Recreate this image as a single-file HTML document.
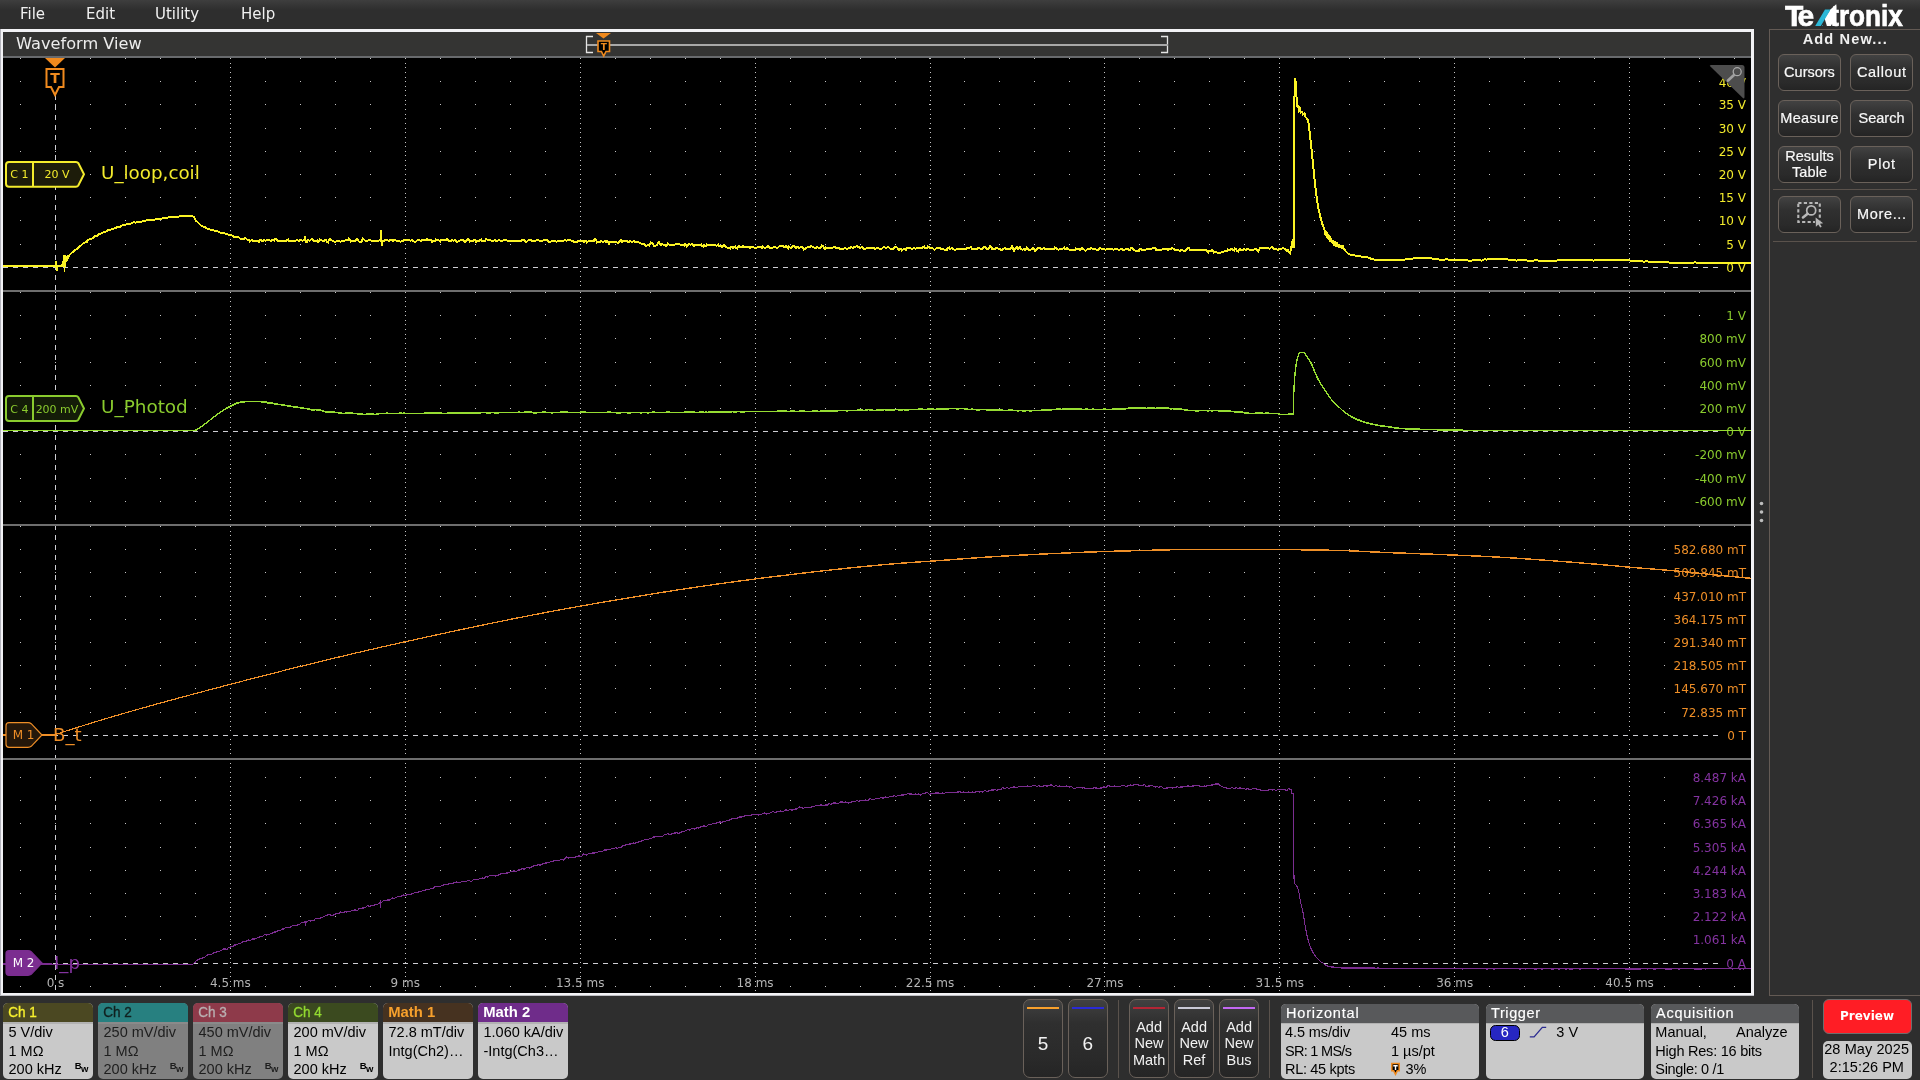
<!DOCTYPE html><html lang="en"><head><meta charset="utf-8"><title>Tektronix - Waveform View</title><style>html,body{margin:0;padding:0;background:#2e2e2e}body{width:1920px;height:1080px;position:relative;overflow:hidden}.a{position:absolute}svg{position:absolute;left:0;top:0;will-change:transform}text{white-space:pre}.lb{font-family:"Liberation Sans","DejaVu Sans",sans-serif}.dj{font-family:"DejaVu Sans","Liberation Sans",sans-serif}</style></head><body>
<div class="a" style="left:0px;top:0px;width:1920px;height:29px;background:linear-gradient(#3e3e3e,#2e2e2e 10px)"></div>
<div class="a" style="left:0px;top:29px;width:1754px;height:967px;background:#f2f2f5"></div>
<div class="a" style="left:0px;top:29px;width:1px;height:967px;background:#b4b4bb"></div>
<div class="a" style="left:0px;top:995px;width:1754px;height:1px;background:#bfbfc4"></div>
<div class="a" style="left:3px;top:32px;width:1748px;height:24px;background:#343433"></div>
<div class="a" style="left:3px;top:56px;width:1748px;height:2px;background:#686a6d"></div>
<div class="a" style="left:3px;top:58px;width:1748px;height:935px;background:#000"></div>
<div class="a" style="left:1754px;top:29px;width:15px;height:1051px;background:#2e2e2e"></div>
<div class="a" style="left:1769px;top:29px;width:160px;height:967px;box-sizing:border-box;border:1px solid #635a54;background:#2f2f2f"></div>
<div class="a" style="left:1778px;top:54px;width:63px;height:36.5px;box-sizing:border-box;border:1px solid #6a615a;border-radius:6px;background:linear-gradient(#424242,#303030 38%,#2a2a2a 80%,#242424)"></div>
<div class="a" style="left:1850px;top:54px;width:63px;height:36.5px;box-sizing:border-box;border:1px solid #6a615a;border-radius:6px;background:linear-gradient(#424242,#303030 38%,#2a2a2a 80%,#242424)"></div>
<div class="a" style="left:1778px;top:100px;width:63px;height:36.5px;box-sizing:border-box;border:1px solid #6a615a;border-radius:6px;background:linear-gradient(#424242,#303030 38%,#2a2a2a 80%,#242424)"></div>
<div class="a" style="left:1850px;top:100px;width:63px;height:36.5px;box-sizing:border-box;border:1px solid #6a615a;border-radius:6px;background:linear-gradient(#424242,#303030 38%,#2a2a2a 80%,#242424)"></div>
<div class="a" style="left:1778px;top:146px;width:63px;height:36.5px;box-sizing:border-box;border:1px solid #6a615a;border-radius:6px;background:linear-gradient(#424242,#303030 38%,#2a2a2a 80%,#242424)"></div>
<div class="a" style="left:1850px;top:146px;width:63px;height:36.5px;box-sizing:border-box;border:1px solid #6a615a;border-radius:6px;background:linear-gradient(#424242,#303030 38%,#2a2a2a 80%,#242424)"></div>
<div class="a" style="left:1778px;top:196px;width:63px;height:36.5px;box-sizing:border-box;border:1px solid #6a615a;border-radius:6px;background:linear-gradient(#424242,#303030 38%,#2a2a2a 80%,#242424)"></div>
<div class="a" style="left:1850px;top:196px;width:63px;height:36.5px;box-sizing:border-box;border:1px solid #6a615a;border-radius:6px;background:linear-gradient(#424242,#303030 38%,#2a2a2a 80%,#242424)"></div>
<div class="a" style="left:1773px;top:189px;width:144px;height:1px;background:#5a524c"></div>
<div class="a" style="left:1773px;top:241px;width:144px;height:1px;background:#5a524c"></div>
<div class="a" style="left:3px;top:1003px;width:90px;height:76px;border-radius:5px;background:#c9c9c9;overflow:hidden"></div>
<div class="a" style="left:3px;top:1003px;width:90px;height:19px;border-radius:5px 5px 0 0;background:#4b4822"></div>
<div class="a" style="left:3px;top:1022px;width:90px;height:1.6px;background:#b2b2b2"></div>
<div class="a" style="left:98px;top:1003px;width:90px;height:76px;border-radius:5px;background:#808080;overflow:hidden"></div>
<div class="a" style="left:98px;top:1003px;width:90px;height:19px;border-radius:5px 5px 0 0;background:#278080"></div>
<div class="a" style="left:98px;top:1022px;width:90px;height:1.6px;background:#8a8a8a"></div>
<div class="a" style="left:193px;top:1003px;width:90px;height:76px;border-radius:5px;background:#808080;overflow:hidden"></div>
<div class="a" style="left:193px;top:1003px;width:90px;height:19px;border-radius:5px 5px 0 0;background:#8e3a4a"></div>
<div class="a" style="left:193px;top:1022px;width:90px;height:1.6px;background:#8a8a8a"></div>
<div class="a" style="left:288px;top:1003px;width:90px;height:76px;border-radius:5px;background:#c9c9c9;overflow:hidden"></div>
<div class="a" style="left:288px;top:1003px;width:90px;height:19px;border-radius:5px 5px 0 0;background:#3b4a1f"></div>
<div class="a" style="left:288px;top:1022px;width:90px;height:1.6px;background:#b2b2b2"></div>
<div class="a" style="left:383px;top:1003px;width:90px;height:76px;border-radius:5px;background:#c9c9c9;overflow:hidden"></div>
<div class="a" style="left:383px;top:1003px;width:90px;height:19px;border-radius:5px 5px 0 0;background:#463220"></div>
<div class="a" style="left:383px;top:1022px;width:90px;height:1.6px;background:#b2b2b2"></div>
<div class="a" style="left:478px;top:1003px;width:90px;height:76px;border-radius:5px;background:#c9c9c9;overflow:hidden"></div>
<div class="a" style="left:478px;top:1003px;width:90px;height:19px;border-radius:5px 5px 0 0;background:#6f2c8a"></div>
<div class="a" style="left:478px;top:1022px;width:90px;height:1.6px;background:#b2b2b2"></div>
<div class="a" style="left:1023.4px;top:999.3px;width:39.4px;height:79.2px;box-sizing:border-box;border:1px solid #6a615a;border-radius:7px;background:linear-gradient(#414141,#2f2f2f 30%,#2a2a2a 75%,#252525)"></div>
<div class="a" style="left:1027.2px;top:1007.2px;width:31.8px;height:2px;background:#f7a02c"></div>
<div class="a" style="left:1068.2px;top:999.3px;width:39.4px;height:79.2px;box-sizing:border-box;border:1px solid #6a615a;border-radius:7px;background:linear-gradient(#414141,#2f2f2f 30%,#2a2a2a 75%,#252525)"></div>
<div class="a" style="left:1072px;top:1007.2px;width:31.8px;height:2px;background:#2a2ad6"></div>
<div class="a" style="left:1118px;top:1000px;width:1px;height:78px;background:#5a524c"></div>
<div class="a" style="left:1129.4px;top:999.3px;width:39.4px;height:79.2px;box-sizing:border-box;border:1px solid #6a615a;border-radius:7px;background:linear-gradient(#414141,#2f2f2f 30%,#2a2a2a 75%,#252525)"></div>
<div class="a" style="left:1133.2px;top:1007.2px;width:31.8px;height:2px;background:#b32535"></div>
<div class="a" style="left:1174.4px;top:999.3px;width:39.4px;height:79.2px;box-sizing:border-box;border:1px solid #6a615a;border-radius:7px;background:linear-gradient(#414141,#2f2f2f 30%,#2a2a2a 75%,#252525)"></div>
<div class="a" style="left:1178.2px;top:1007.2px;width:31.8px;height:2px;background:#c9c9d6"></div>
<div class="a" style="left:1219.4px;top:999.3px;width:39.4px;height:79.2px;box-sizing:border-box;border:1px solid #6a615a;border-radius:7px;background:linear-gradient(#414141,#2f2f2f 30%,#2a2a2a 75%,#252525)"></div>
<div class="a" style="left:1223.2px;top:1007.2px;width:31.8px;height:2px;background:#c268f2"></div>
<div class="a" style="left:1269px;top:1000px;width:1px;height:78px;background:#5a524c"></div>
<div class="a" style="left:1280.7px;top:1003.5px;width:198.3px;height:75px;border-radius:5px;background:#c9c9c9"></div>
<div class="a" style="left:1280.7px;top:1003.5px;width:198.3px;height:19px;border-radius:5px 5px 0 0;background:#58595b"></div>
<div class="a" style="left:1280.7px;top:1022.5px;width:198.3px;height:1.6px;background:#b2b2b2"></div>
<div class="a" style="left:1485.7px;top:1003.5px;width:158.3px;height:75px;border-radius:5px;background:#c9c9c9"></div>
<div class="a" style="left:1485.7px;top:1003.5px;width:158.3px;height:19px;border-radius:5px 5px 0 0;background:#58595b"></div>
<div class="a" style="left:1485.7px;top:1022.5px;width:158.3px;height:1.6px;background:#b2b2b2"></div>
<div class="a" style="left:1490px;top:1025.3px;width:29.6px;height:15.4px;box-sizing:border-box;border:1px solid #000;border-radius:5.5px;background:#2626c2"></div>
<div class="a" style="left:1650.8px;top:1003.5px;width:148.2px;height:75px;border-radius:5px;background:#c9c9c9"></div>
<div class="a" style="left:1650.8px;top:1003.5px;width:148.2px;height:19px;border-radius:5px 5px 0 0;background:#58595b"></div>
<div class="a" style="left:1650.8px;top:1022.5px;width:148.2px;height:1.6px;background:#b2b2b2"></div>
<div class="a" style="left:1811.5px;top:1000px;width:1px;height:78px;background:#5a524c"></div>
<div class="a" style="left:1822.8px;top:999.4px;width:89px;height:35px;box-sizing:border-box;border:1px solid #6e6e6e;border-radius:6px;background:#ff1d25"></div>
<div class="a" style="left:1822.8px;top:1040.5px;width:89px;height:38px;border-radius:5px;background:#c9c9c9"></div>
<svg width="1920" height="1080" viewBox="0 0 1920 1080">
<defs>
<path id="dr" d="M20,0h1M55,0h1M90,0h1M125,0h1M160,0h1M195,0h1M230,0h1M265,0h1M300,0h1M335,0h1M370,0h1M405,0h1M440,0h1M475,0h1M510,0h1M545,0h1M580,0h1M615,0h1M650,0h1M685,0h1M720,0h1M755,0h1M790,0h1M825,0h1M860,0h1M895,0h1M929,0h1M964,0h1M999,0h1M1034,0h1M1069,0h1M1104,0h1M1139,0h1M1174,0h1M1209,0h1M1244,0h1M1279,0h1M1314,0h1M1349,0h1M1384,0h1M1419,0h1M1454,0h1M1489,0h1M1524,0h1M1559,0h1M1594,0h1M1629,0h1M1664,0h1M1699,0h1M1734,0h1" stroke="#c4c4c4" stroke-width="1" fill="none" shape-rendering="crispEdges"/>
<clipPath id="wclip"><rect x="3" y="58" width="1748" height="935"/></clipPath>
<path id="dc" d="M0,58v1M0,63v1M0,67v1M0,72v1M0,77v1M0,81v1M0,86v1M0,90v1M0,95v1M0,100v1M0,104v1M0,109v1M0,114v1M0,118v1M0,123v1M0,128v1M0,132v1M0,137v1M0,142v1M0,146v1M0,151v1M0,155v1M0,160v1M0,165v1M0,169v1M0,174v1M0,179v1M0,183v1M0,188v1M0,193v1M0,197v1M0,202v1M0,206v1M0,211v1M0,216v1M0,220v1M0,225v1M0,230v1M0,234v1M0,239v1M0,244v1M0,248v1M0,253v1M0,258v1M0,262v1M0,271v1M0,276v1M0,281v1M0,285v1M0,292v1M0,297v1M0,301v1M0,306v1M0,311v1M0,315v1M0,320v1M0,324v1M0,329v1M0,334v1M0,338v1M0,343v1M0,348v1M0,352v1M0,357v1M0,362v1M0,366v1M0,371v1M0,376v1M0,380v1M0,385v1M0,389v1M0,394v1M0,399v1M0,403v1M0,408v1M0,413v1M0,417v1M0,422v1M0,427v1M0,436v1M0,440v1M0,445v1M0,450v1M0,454v1M0,459v1M0,464v1M0,468v1M0,473v1M0,478v1M0,482v1M0,487v1M0,492v1M0,496v1M0,501v1M0,505v1M0,510v1M0,515v1M0,519v1M0,526v1M0,531v1M0,535v1M0,540v1M0,545v1M0,549v1M0,554v1M0,558v1M0,563v1M0,568v1M0,572v1M0,577v1M0,582v1M0,586v1M0,591v1M0,596v1M0,600v1M0,605v1M0,610v1M0,614v1M0,619v1M0,623v1M0,628v1M0,633v1M0,637v1M0,642v1M0,647v1M0,651v1M0,656v1M0,661v1M0,665v1M0,670v1M0,674v1M0,679v1M0,684v1M0,688v1M0,693v1M0,698v1M0,702v1M0,707v1M0,712v1M0,716v1M0,721v1M0,726v1M0,730v1M0,739v1M0,744v1M0,749v1M0,753v1M0,763v1M0,767v1M0,772v1M0,777v1M0,781v1M0,786v1M0,791v1M0,795v1M0,800v1M0,805v1M0,809v1M0,814v1M0,818v1M0,823v1M0,828v1M0,832v1M0,837v1M0,842v1M0,846v1M0,851v1M0,856v1M0,860v1M0,865v1M0,870v1M0,874v1M0,879v1M0,883v1M0,888v1M0,893v1M0,897v1M0,902v1M0,907v1M0,911v1M0,916v1M0,921v1M0,925v1M0,930v1M0,934v1M0,939v1M0,944v1M0,948v1M0,953v1M0,958v1M0,962v1M0,967v1M0,972v1M0,976v1M0,981v1M0,986v1M0,990v1" stroke="#c4c4c4" stroke-width="1" fill="none" shape-rendering="crispEdges"/>
</defs>
<g clip-path="url(#wclip)">
<use href="#dr" y="58.5"/>
<use href="#dr" y="81.5"/>
<use href="#dr" y="104.5"/>
<use href="#dr" y="128.5"/>
<use href="#dr" y="151.5"/>
<use href="#dr" y="174.5"/>
<use href="#dr" y="197.5"/>
<use href="#dr" y="220.5"/>
<use href="#dr" y="244.5"/>
<use href="#dr" y="292.5"/>
<use href="#dr" y="315.5"/>
<use href="#dr" y="338.5"/>
<use href="#dr" y="362.5"/>
<use href="#dr" y="385.5"/>
<use href="#dr" y="408.5"/>
<use href="#dr" y="454.5"/>
<use href="#dr" y="478.5"/>
<use href="#dr" y="501.5"/>
<use href="#dr" y="526.5"/>
<use href="#dr" y="549.5"/>
<use href="#dr" y="572.5"/>
<use href="#dr" y="596.5"/>
<use href="#dr" y="619.5"/>
<use href="#dr" y="642.5"/>
<use href="#dr" y="665.5"/>
<use href="#dr" y="688.5"/>
<use href="#dr" y="712.5"/>
<use href="#dr" y="777.5"/>
<use href="#dr" y="800.5"/>
<use href="#dr" y="823.5"/>
<use href="#dr" y="847.5"/>
<use href="#dr" y="870.5"/>
<use href="#dr" y="893.5"/>
<use href="#dr" y="916.5"/>
<use href="#dr" y="939.5"/>
<use href="#dr" y="986.5"/>
<use href="#dc" x="230.5"/>
<use href="#dc" x="405.5"/>
<use href="#dc" x="580.5"/>
<use href="#dc" x="755.5"/>
<use href="#dc" x="930.5"/>
<use href="#dc" x="1104.5"/>
<use href="#dc" x="1279.5"/>
<use href="#dc" x="1454.5"/>
<use href="#dc" x="1629.5"/>
<line x1="3" x2="1719" y1="267.5" y2="267.5" stroke="#cfcfd4" stroke-dasharray="5 5" shape-rendering="crispEdges"/>
<line x1="3" x2="1719" y1="431.5" y2="431.5" stroke="#cfcfd4" stroke-dasharray="5 5" shape-rendering="crispEdges"/>
<line x1="3" x2="1719" y1="735.5" y2="735.5" stroke="#cfcfd4" stroke-dasharray="5 5" shape-rendering="crispEdges"/>
<line x1="3" x2="1719" y1="963.5" y2="963.5" stroke="#cfcfd4" stroke-dasharray="5 5" shape-rendering="crispEdges"/>
<line x1="55.5" x2="55.5" y1="95" y2="993" stroke="#cfcfd4" stroke-dasharray="5 5" shape-rendering="crispEdges"/>
<rect x="3" y="290" width="1748" height="2" fill="#6e6e6e"/>
<rect x="3" y="524" width="1748" height="2" fill="#6e6e6e"/>
<rect x="3" y="758" width="1748" height="2" fill="#6e6e6e"/>
<rect x="1717" y="77" width="30" height="13" fill="#000"/>
<text class="dj" x="1746" y="87.1" font-size="12" fill="#f3eb2c" text-anchor="end">40 V</text>
<rect x="1717" y="98" width="30" height="13" fill="#000"/>
<text class="dj" x="1746" y="108.9" font-size="12" fill="#f3eb2c" text-anchor="end">35 V</text>
<rect x="1717" y="122" width="30" height="13" fill="#000"/>
<text class="dj" x="1746" y="132.9" font-size="12" fill="#f3eb2c" text-anchor="end">30 V</text>
<rect x="1717" y="146" width="30" height="13" fill="#000"/>
<text class="dj" x="1746" y="155.9" font-size="12" fill="#f3eb2c" text-anchor="end">25 V</text>
<rect x="1717" y="168" width="30" height="13" fill="#000"/>
<text class="dj" x="1746" y="178.9" font-size="12" fill="#f3eb2c" text-anchor="end">20 V</text>
<rect x="1717" y="192" width="30" height="13" fill="#000"/>
<text class="dj" x="1746" y="201.9" font-size="12" fill="#f3eb2c" text-anchor="end">15 V</text>
<rect x="1717" y="214" width="30" height="13" fill="#000"/>
<text class="dj" x="1746" y="224.9" font-size="12" fill="#f3eb2c" text-anchor="end">10 V</text>
<rect x="1724" y="238" width="23" height="13" fill="#000"/>
<text class="dj" x="1746" y="248.9" font-size="12" fill="#f3eb2c" text-anchor="end">5 V</text>
<rect x="1724" y="262" width="23" height="13" fill="#000"/>
<text class="dj" x="1746" y="271.9" font-size="12" fill="#f3eb2c" text-anchor="end">0 V</text>
<rect x="1724" y="310" width="23" height="13" fill="#000"/>
<text class="dj" x="1746" y="319.9" font-size="12" fill="#8acb2e" text-anchor="end">1 V</text>
<rect x="1697" y="332" width="50" height="13" fill="#000"/>
<text class="dj" x="1746" y="342.9" font-size="12" fill="#8acb2e" text-anchor="end">800 mV</text>
<rect x="1697" y="356" width="50" height="13" fill="#000"/>
<text class="dj" x="1746" y="366.9" font-size="12" fill="#8acb2e" text-anchor="end">600 mV</text>
<rect x="1697" y="380" width="50" height="13" fill="#000"/>
<text class="dj" x="1746" y="389.9" font-size="12" fill="#8acb2e" text-anchor="end">400 mV</text>
<rect x="1697" y="402" width="50" height="13" fill="#000"/>
<text class="dj" x="1746" y="412.9" font-size="12" fill="#8acb2e" text-anchor="end">200 mV</text>
<rect x="1724" y="426" width="23" height="13" fill="#000"/>
<text class="dj" x="1746" y="435.9" font-size="12" fill="#8acb2e" text-anchor="end">0 V</text>
<rect x="1693" y="448" width="54" height="13" fill="#000"/>
<text class="dj" x="1746" y="458.9" font-size="12" fill="#8acb2e" text-anchor="end">-200 mV</text>
<rect x="1693" y="472" width="54" height="13" fill="#000"/>
<text class="dj" x="1746" y="482.9" font-size="12" fill="#8acb2e" text-anchor="end">-400 mV</text>
<rect x="1693" y="496" width="54" height="13" fill="#000"/>
<text class="dj" x="1746" y="505.9" font-size="12" fill="#8acb2e" text-anchor="end">-600 mV</text>
<rect x="1672" y="544" width="75" height="13" fill="#000"/>
<text class="dj" x="1746" y="553.9" font-size="12" fill="#ee8e27" text-anchor="end">582.680 mT</text>
<rect x="1672" y="566" width="75" height="13" fill="#000"/>
<text class="dj" x="1746" y="576.9" font-size="12" fill="#ee8e27" text-anchor="end">509.845 mT</text>
<rect x="1672" y="590" width="75" height="13" fill="#000"/>
<text class="dj" x="1746" y="600.9" font-size="12" fill="#ee8e27" text-anchor="end">437.010 mT</text>
<rect x="1672" y="614" width="75" height="13" fill="#000"/>
<text class="dj" x="1746" y="623.9" font-size="12" fill="#ee8e27" text-anchor="end">364.175 mT</text>
<rect x="1672" y="636" width="75" height="13" fill="#000"/>
<text class="dj" x="1746" y="646.9" font-size="12" fill="#ee8e27" text-anchor="end">291.340 mT</text>
<rect x="1672" y="660" width="75" height="13" fill="#000"/>
<text class="dj" x="1746" y="669.9" font-size="12" fill="#ee8e27" text-anchor="end">218.505 mT</text>
<rect x="1672" y="682" width="75" height="13" fill="#000"/>
<text class="dj" x="1746" y="692.9" font-size="12" fill="#ee8e27" text-anchor="end">145.670 mT</text>
<rect x="1679" y="706" width="68" height="13" fill="#000"/>
<text class="dj" x="1746" y="716.9" font-size="12" fill="#ee8e27" text-anchor="end">72.835 mT</text>
<rect x="1725" y="730" width="22" height="13" fill="#000"/>
<text class="dj" x="1746" y="739.9" font-size="12" fill="#ee8e27" text-anchor="end">0 T</text>
<rect x="1691" y="772" width="56" height="13" fill="#000"/>
<text class="dj" x="1746" y="781.9" font-size="12" fill="#8433a0" text-anchor="end">8.487 kA</text>
<rect x="1691" y="794" width="56" height="13" fill="#000"/>
<text class="dj" x="1746" y="804.9" font-size="12" fill="#8433a0" text-anchor="end">7.426 kA</text>
<rect x="1691" y="818" width="56" height="13" fill="#000"/>
<text class="dj" x="1746" y="827.9" font-size="12" fill="#8433a0" text-anchor="end">6.365 kA</text>
<rect x="1691" y="842" width="56" height="13" fill="#000"/>
<text class="dj" x="1746" y="851.9" font-size="12" fill="#8433a0" text-anchor="end">5.305 kA</text>
<rect x="1691" y="864" width="56" height="13" fill="#000"/>
<text class="dj" x="1746" y="874.9" font-size="12" fill="#8433a0" text-anchor="end">4.244 kA</text>
<rect x="1691" y="888" width="56" height="13" fill="#000"/>
<text class="dj" x="1746" y="897.9" font-size="12" fill="#8433a0" text-anchor="end">3.183 kA</text>
<rect x="1691" y="910" width="56" height="13" fill="#000"/>
<text class="dj" x="1746" y="920.9" font-size="12" fill="#8433a0" text-anchor="end">2.122 kA</text>
<rect x="1691" y="934" width="56" height="13" fill="#000"/>
<text class="dj" x="1746" y="943.9" font-size="12" fill="#8433a0" text-anchor="end">1.061 kA</text>
<rect x="1724" y="958" width="23" height="13" fill="#000"/>
<text class="dj" x="1746" y="967.9" font-size="12" fill="#8433a0" text-anchor="end">0 A</text>
<text class="dj" x="55.5" y="987" font-size="12" fill="#b4b4b4" text-anchor="middle">0 s</text>
<text class="dj" x="230.4" y="987" font-size="12" fill="#b4b4b4" text-anchor="middle">4.5 ms</text>
<text class="dj" x="405.3" y="987" font-size="12" fill="#b4b4b4" text-anchor="middle">9 ms</text>
<text class="dj" x="580.2" y="987" font-size="12" fill="#b4b4b4" text-anchor="middle">13.5 ms</text>
<text class="dj" x="755.1" y="987" font-size="12" fill="#b4b4b4" text-anchor="middle">18 ms</text>
<text class="dj" x="930" y="987" font-size="12" fill="#b4b4b4" text-anchor="middle">22.5 ms</text>
<text class="dj" x="1104.9" y="987" font-size="12" fill="#b4b4b4" text-anchor="middle">27 ms</text>
<text class="dj" x="1279.8" y="987" font-size="12" fill="#b4b4b4" text-anchor="middle">31.5 ms</text>
<text class="dj" x="1454.7" y="987" font-size="12" fill="#b4b4b4" text-anchor="middle">36 ms</text>
<text class="dj" x="1629.6" y="987" font-size="12" fill="#b4b4b4" text-anchor="middle">40.5 ms</text>
<text class="dj" x="101" y="179" font-size="18.3" fill="#f3eb2c">U_loop,coil</text>
<text class="dj" x="101" y="413" font-size="18.4" fill="#8acb2e">U_Photod</text>
<text class="dj" x="53" y="740.5" font-size="18.2" fill="#ee8e27">B_t</text>
<text class="dj" x="54" y="968.8" font-size="18.2" fill="#8433a0">I_p</text>
<g fill="none" stroke-linejoin="miter" shape-rendering="crispEdges">
<polyline stroke="#f09028" stroke-width="1.1" points="3,735 55,735 56,734.5 57,734 58,733.5 59,733.5 60,733 61,732.5 62,732.5 63,732 64,731.5 65,731.5 66,731 67,730.5 68,730.5 69,730 70,730 71,729.5 72,729 73,729 74,728.5 75,728 76,728 77,727.5 78,727 79,727 80,726.5 81,726.5 82,726 83,725.5 84,725.5 85,725 86,724.5 87,724.5 88,724 89,724 90,723.5 91,723 92,723 93,722.5 94,722 95,722 96,721.5 97,721.5 98,721 99,720.5 100,720.5 101,720 102,720 103,719.5 104,719 105,719 106,718.5 107,718.5 108,718 109,717.5 110,717.5 111,717 112,717 113,716.5 114,716 115,716 116,715.5 117,715.5 118,715 119,715 120,714.5 121,714 122,714 123,713.5 124,713.5 125,713 126,712.5 127,712.5 128,712 129,712 130,711.5 131,711.5 132,711 133,710.5 134,710.5 135,710 136,710 137,709.5 138,709.5 139,709 140,708.5 141,708.5 142,708 143,708 144,707.5 145,707.5 146,707 147,707 148,706.5 149,706 150,706 151,705.5 152,705.5 153,705 154,705 155,704.5 156,704 157,704 158,703.5 159,703.5 160,703 161,703 162,702.5 163,702.5 164,702 165,702 166,701.5 167,701 168,701 169,700.5 170,700.5 171,700 172,700 173,699.5 174,699.5 175,699 176,699 177,698.5 178,698 179,698 180,697.5 181,697.5 182,697 183,697 184,696.5 185,696.5 186,696 187,696 188,695.5 189,695.5 190,695 191,694.5 192,694.5 193,694 194,694 195,693.5 196,693.5 197,693 198,693 199,692.5 200,692.5 201,692 202,692 203,691.5 204,691.5 205,691 206,690.5 207,690.5 208,690 209,690 210,689.5 211,689.5 212,689 213,689 214,688.5 215,688.5 216,688 217,688 218,687.5 219,687.5 220,687 221,687 222,686.5 223,686 224,686 225,685.5 226,685.5 227,685 228,685 229,684.5 230,684.5 231,684 232,684 233,683.5 234,683.5 235,683 236,683 237,682.5 238,682.5 239,682 240,682 241,681.5 242,681.5 243,681 244,680.5 245,680.5 246,680 247,680 248,679.5 249,679.5 250,679 251,679 252,678.5 253,678.5 254,678 255,678 256,677.5 257,677.5 258,677 259,677 260,676.5 261,676.5 262,676 263,676 264,675.5 265,675.5 266,675 267,675 268,674.5 269,674.5 270,674 271,674 272,673.5 273,673.5 274,673 275,673 276,672.5 277,672.5 278,672 279,672 280,671.5 281,671.5 282,671 283,670.5 284,670.5 285,670 286,670 287,669.5 288,669.5 289,669 290,669 291,668.5 292,668.5 293,668 294,668 295,667.5 296,667.5 297,667 298,667 299,666.5 301,666.5 302,666 303,666 304,665.5 305,665.5 306,665 307,665 308,664.5 309,664.5 310,664 311,664 312,663.5 313,663.5 314,663 315,663 316,662.5 317,662.5 318,662 319,662 320,661.5 321,661.5 322,661 323,661 324,660.5 325,660.5 326,660 327,660 328,659.5 329,659.5 330,659 331,659 332,658.5 333,658.5 334,658 335,658 336,657.5 337,657.5 338,657 340,657 341,656.5 342,656.5 343,656 344,656 345,655.5 346,655.5 347,655 348,655 349,654.5 350,654.5 351,654 352,654 353,653.5 354,653.5 355,653 356,653 357,652.5 359,652.5 360,652 361,652 362,651.5 363,651.5 364,651 365,651 366,650.5 367,650.5 368,650 369,650 370,649.5 372,649.5 373,649 374,649 375,648.5 376,648.5 377,648 378,648 379,647.5 380,647.5 381,647 382,647 383,646.5 385,646.5 386,646 387,646 388,645.5 389,645.5 390,645 391,645 392,644.5 394,644.5 395,644 396,644 397,643.5 398,643.5 399,643 400,643 401,642.5 402,642.5 403,642 405,642 406,641.5 407,641.5 408,641 409,641 410,640.5 412,640.5 413,640 414,640 415,639.5 416,639.5 417,639 418,639 419,638.5 421,638.5 422,638 423,638 424,637.5 425,637.5 426,637 427,637 428,636.5 430,636.5 431,636 432,636 433,635.5 434,635.5 435,635 437,635 438,634.5 439,634.5 440,634 441,634 442,633.5 444,633.5 445,633 446,633 447,632.5 448,632.5 449,632 450,632 451,631.5 453,631.5 454,631 455,631 456,630.5 457,630.5 458,630 460,630 461,629.5 462,629.5 463,629 465,629 466,628.5 467,628.5 468,628 469,628 470,627.5 472,627.5 473,627 474,627 475,626.5 476,626.5 477,626 479,626 480,625.5 481,625.5 482,625 484,625 485,624.5 486,624.5 487,624 488,624 489,623.5 491,623.5 492,623 493,623 494,622.5 496,622.5 497,622 498,622 499,621.5 501,621.5 502,621 503,621 504,620.5 506,620.5 507,620 508,620 509,619.5 510,619.5 511,619 513,619 514,618.5 515,618.5 516,618 518,618 519,617.5 521,617.5 522,617 523,617 524,616.5 526,616.5 527,616 528,616 529,615.5 531,615.5 532,615 533,615 534,614.5 536,614.5 537,614 539,614 540,613.5 541,613.5 542,613 544,613 545,612.5 546,612.5 547,612 549,612 550,611.5 552,611.5 553,611 554,611 555,610.5 557,610.5 558,610 560,610 561,609.5 563,609.5 564,609 565,609 566,608.5 568,608.5 569,608 571,608 572,607.5 574,607.5 575,607 576,607 577,606.5 579,606.5 580,606 582,606 583,605.5 585,605.5 586,605 588,605 589,604.5 591,604.5 592,604 593,604 594,603.5 596,603.5 597,603 599,603 600,602.5 602,602.5 603,602 605,602 606,601.5 608,601.5 609,601 611,601 612,600.5 614,600.5 615,600 617,600 618,599.5 620,599.5 621,599 623,599 624,598.5 626,598.5 627,598 629,598 630,597.5 632,597.5 633,597 635,597 636,596.5 638,596.5 639,596 641,596 642,595.5 644,595.5 645,595 647,595 648,594.5 650,594.5 651,594 653,594 654,593.5 656,593.5 657,593 659,593 660,592.5 662,592.5 663,592 666,592 667,591.5 669,591.5 670,591 672,591 673,590.5 675,590.5 676,590 678,590 679,589.5 682,589.5 683,589 685,589 686,588.5 688,588.5 689,588 692,588 693,587.5 695,587.5 696,587 698,587 699,586.5 702,586.5 703,586 705,586 706,585.5 709,585.5 710,585 712,585 713,584.5 715,584.5 716,584 719,584 720,583.5 723,583.5 724,583 726,583 727,582.5 730,582.5 731,582 734,582 735,581.5 737,581.5 738,581 741,581 742,580.5 745,580.5 746,580 749,580 750,579.5 753,579.5 754,579 756,579 757,578.5 760,578.5 761,578 764,578 765,577.5 768,577.5 769,577 772,577 773,576.5 776,576.5 777,576 781,576 782,575.5 785,575.5 786,575 789,575 790,574.5 793,574.5 794,574 797,574 798,573.5 801,573.5 802,573 806,573 807,572.5 810,572.5 811,572 814,572 815,571.5 819,571.5 820,571 823,571 824,570.5 828,570.5 829,570 832,570 833,569.5 837,569.5 838,569 842,569 843,568.5 846,568.5 847,568 851,568 852,567.5 856,567.5 857,567 861,567 862,566.5 866,566.5 867,566 872,566 873,565.5 877,565.5 878,565 882,565 883,564.5 888,564.5 889,564 894,564 895,563.5 900,563.5 901,563 907,563 908,562.5 914,562.5 915,562 921,562 922,561.5 929,561.5 930,561 936,561 937,560.5 943,560.5 944,560 950,560 951,559.5 956,559.5 957,559 963,559 964,558.5 970,558.5 971,558 977,558 978,557.5 984,557.5 985,557 992,557 993,556.5 1000,556.5 1001,556 1009,556 1010,555.5 1018,555.5 1019,555 1028,555 1029,554.5 1038,554.5 1039,554 1048,554 1049,553.5 1060,553.5 1061,553 1071,553 1072,552.5 1083,552.5 1084,552 1097,552 1098,551.5 1113,551.5 1114,551 1131,551 1132,550.5 1151,550.5 1152,550 1170,550 1171,549.5 1300,549.5 1301,550 1329,550 1330,550.5 1348,550.5 1349,551 1359,551 1360,551.5 1369,551.5 1370,552 1380,552 1381,552.5 1392,552.5 1393,553 1406,553 1407,553.5 1419,553.5 1420,554 1433,554 1434,554.5 1446,554.5 1447,555 1458,555 1459,555.5 1470,555.5 1471,556 1481,556 1482,556.5 1491,556.5 1492,557 1500,557 1501,557.5 1509,557.5 1510,558 1517,558 1518,558.5 1524,558.5 1525,559 1531,559 1532,559.5 1538,559.5 1539,560 1545,560 1546,560.5 1552,560.5 1553,561 1558,561 1559,561.5 1565,561.5 1566,562 1572,562 1573,562.5 1578,562.5 1579,563 1584,563 1585,563.5 1590,563.5 1591,564 1597,564 1598,564.5 1602,564.5 1603,565 1608,565 1609,565.5 1614,565.5 1615,566 1619,566 1620,566.5 1624,566.5 1625,567 1630,567 1631,567.5 1636,567.5 1637,568 1642,568 1643,568.5 1649,568.5 1650,569 1655,569 1656,569.5 1661,569.5 1662,570 1667,570 1668,570.5 1673,570.5 1674,571 1679,571 1680,571.5 1684,571.5 1685,572 1689,572 1690,572.5 1694,572.5 1695,573 1699,573 1700,573.5 1704,573.5 1705,574 1708,574 1709,574.5 1713,574.5 1714,575 1718,575 1719,575.5 1723,575.5 1724,576 1728,576 1729,576.5 1734,576.5 1735,577 1739,577 1740,577.5 1744,577.5 1745,578 1750,578 1751,578.5"/>
<polyline stroke="#7b2d90" stroke-width="1.1" points="3,964.5 192,964.5 193,964 194,963 195,962.5 196,961 197,960.5 198,959.5 199,959 200,959 201,958.5 202,958 203,958 204,957.5 205,957 206,956 207,955 208,955 209,954.5 210,954 211,954.5 212,954 213,953.5 214,952.5 216,952.5 217,951.5 219,951.5 220,951 221,950.5 222,950 223,949 226,949 227,949.5 228,948 229,947.5 230,947.5 231,946.5 233,946.5 234,945 236,945 237,944.5 238,944 239,943.5 240,944 241,943 242,942 243,942 244,941.5 246,941.5 247,940.5 248,940 249,940 250,940.5 251,940 252,939 255,939 256,938.5 257,938 258,937.5 259,937.5 260,936.5 262,936.5 263,936 264,935 265,934.5 266,935 267,935 268,934.5 269,934.5 270,934 271,933.5 272,933 273,933 274,932 276,932 277,931.5 278,930.5 279,930.5 280,931 281,930 282,929 284,929 285,928 286,927.5 287,928 288,927.5 289,927 290,927.5 291,926.5 292,926 293,925.5 294,925 295,925.5 296,925.5 297,925 298,925 299,924.5 300,924 301,923 302,922.5 303,923 304,922.5 305,921.5 305.3,925.5 306,922 307,922 308,921 309,920.5 310,921 311,921 312,920.5 313,921 314,920.5 315,919 316,918.5 317,918.5 318,919 319,918.5 320,918.5 321,917.5 322,917.5 323,917 324,916.5 325,916 326,915.5 327,915 328,915 329,914.5 330,915 331,915 332,915.5 333,915.5 334,914.5 335,914 336,914 337,913.5 339,913.5 340,912 341,912 342,912.5 344,912.5 345,911.5 346,912 347,912 348,911 349,911.5 350,911.5 351,911 352,910.5 353,910.5 354,910 356,910 357,910.5 358,910 359,908.5 361,908.5 362,908 364,908 365,907.5 366,907 367,906 368,905.5 369,906.5 370,906.5 371,905.5 372,905 373,905.5 374,905.5 375,904.5 377,904.5 378,904 379,903 380,903 380.3,908 380.6,900 381,903 382,902 383,901 384,900.5 386,900.5 387,900 390,900 391,899 392,898 393,898 394,898.5 395,898 396,897.5 397,897 398,896.5 399,896 400,896.5 401,896.5 402,895.5 403,895 404,895 405,895.5 406,895.5 407,894.5 408,894.5 409,895 410,894.5 411,894 412,894 413,893.5 414,893 415,892.5 418,892.5 419,891.5 420,891 421,891.5 422,891 423,890.5 425,890.5 426,889.5 427,889 428,889.5 429,889.5 430,889 431,888.5 433,888.5 434,887.5 435,886.5 436,887 437,886.5 438,886 439,886.5 440,886.5 441,886 442,885.5 443,885 444,885 445,884.5 446,884 447,884.5 448,884.5 449,883.5 452,883.5 453,883 454,883 455,882.5 456,882 457,882 458,882.5 460,882.5 461,882 462,881.5 466,881.5 467,881 468,880.5 469,880.5 470,881 471,882 472,881 473,880 474,879.5 475,879 476,880 477,879.5 478,879.5 479,879 480,878.5 481,879 482,878 483,878 484,878.5 485,877.5 486,876.5 487,877 488,877 489,876 490,875.5 491,876 492,875.5 493,876 494,875.5 495,876 496,876 497,875.5 498,875 499,875 500,874.5 501,873.5 505,873.5 506,873 508,873 509,872.5 510,872 511,871.5 512,871.5 513,871 515,871 516,871.5 517,871 518,870 520,870 521,869.5 522,868.5 523,869 525,869 526,868 527,867.5 528,867.5 529,868 530,868 531,867 532,867 533,866.5 534,865.5 537,865.5 538,864.5 539,864.5 540,865.5 541,864.5 542,864 543,864 544,863.5 545,863 547,863 548,862.5 549,862.5 550,862 551,861.5 552,862 553,861.5 554,860.5 555,860.5 556,860 557,860.5 558,861 559,860.5 560,860 561,859.5 562,859 563,860 564,860 565,858.5 566,857 567,857 568,858 569,858 570,857.5 572,857.5 573,857 574,857.5 575,857 576,857 577,856.5 578,856 580,856 581,856.5 582,856 583,854 584,854 585,854.5 586,855 587,855 588,854 589,853.5 591,853.5 592,853 595,853 596,852.5 597,852.5 598,852 599,851.5 602,851.5 603,851 604,850 607,850 608,849.5 610,849.5 611,849 612,848.5 614,848.5 615,848 616,847.5 617,848.5 618,848 619,847.5 621,847.5 622,846.5 623,845.5 625,845.5 626,844.5 628,844.5 629,844 631,844 632,843.5 633,843 634,843 635,843.5 636,842.5 638,842.5 639,841.5 640,841.5 641,841 642,841 643,840.5 644,840 645,839.5 646,839 647,839.5 648,839.5 649,839 650,838.5 651,838.5 652,838 653,837 655,837 656,836.5 660,836.5 661,837 662,836.5 663,836 664,835 665,834.5 666,834.5 667,834 668,833.5 669,834.5 670,835 671,834.5 672,833.5 673,833.5 674,833 676,833 677,832.5 678,833.5 679,833 680,833 681,832.5 682,831.5 683,831.5 684,832 685,831 686,830.5 687,830 688,829.5 689,830 690,830 691,829 692,828.5 693,828.5 694,829 695,829 696,828.5 697,827.5 698,828 699,828 700,827 701,827 702,826.5 703,826 705,826 706,826.5 707,826 708,825 709,824.5 710,825 711,824.5 712,824 713,823 714,823.5 715,824 716,823.5 717,822.5 718,823 719,822.5 720,821.5 721,823 722,822.5 723,821.5 724,821 725,821.5 726,821 727,820.5 728,820.5 729,820 730,820 731,819.5 732,818.5 733,819 734,818.5 735,818.5 736,819 737,818.5 738,817.5 739,817 742,817 743,816.5 744,816.5 745,815.5 746,816 747,815.5 748,815.5 749,816 750,815.5 751,815 752,815 753,814.5 757,814.5 758,815 759,815 760,814.5 761,814.5 762,814 763,813.5 764,813 765,813 766,814 767,814 768,813 769,813.5 770,813 771,812.5 772,812 773,811.5 774,812 775,812.5 776,812.5 777,811.5 778,811 779,811.5 780,811 781,811 782,811.5 783,811.5 784,811 785,810.5 786,809.5 787,810.5 788,811 789,810 790,809.5 791,810 793,810 794,809.5 795,809 797,809 798,808 799,807 800,807 801,807.5 802,807.5 803,808.5 804,808 805,807.5 808,807.5 809,807 810,807.5 811,807 812,807 813,806.5 814,806.5 815,806 816,805.5 817,805 818,805.5 819,805.5 820,805 822,805 823,805.5 824,805.5 825,805 828,805 829,803.5 830,804 831,804.5 832,803.5 833,803 836,803 837,803.5 838,804 839,803 840,802 843,802 844,802.5 845,802 846,802 847,802.5 848,803 849,803 850,802.5 851,802 852,802 853,801.5 855,801.5 856,801 857,800.5 858,801 859,801.5 860,800.5 861,800 862,800.5 864,800.5 865,800 866,800 867,800.5 868,800.5 869,799.5 870,798.5 871,799 872,800 873,799.5 874,799.5 875,799 876,798 877,798.5 878,799 879,798.5 880,798 881,797.5 882,798 884,798 885,797 886,797 887,797.5 888,797.5 889,797 890,796.5 891,796 892,796.5 893,796.5 894,795.5 895,796 896,796.5 897,796 898,795.5 899,796 900,795.5 901,795 904,795 905,794.5 906,794.5 907,794 908,793.5 909,794 912,794 913,794.5 914,794.5 915,794 916,794 917,794.5 918,794 919,794 920,795 921,795 922,794 923,793.5 924,794 925,793.5 926,792.5 927,792.5 928,793 929,794 930,794.5 931,793.5 932,793 933,793.5 934,793.5 935,793 939,793 940,793.5 941,794 942,793 943,793 944,793.5 945,793 946,792.5 950,792.5 951,793 952,792.5 953,792 954,792.5 955,793 956,792.5 957,792 959,792 960,791.5 961,792.5 962,792.5 963,792 964,792 965,792.5 966,793 967,792.5 968,792 969,792 970,792.5 971,793 972,792 973,792 974,792.5 975,792 976,792 977,791.5 978,791.5 979,792 980,792 981,791.5 982,792 983,792 984,791 985,790.5 986,791 987,791.5 988,791 989,791 990,790.5 991,790 994,790 995,789.5 996,790 997,790.5 998,789.5 999,789.5 1000,790 1001,789.5 1002,788 1003,787.5 1004,788.5 1005,788.5 1006,788 1007,787 1008,788 1009,788.5 1010,788 1011,787.5 1012,787.5 1013,787 1015,787 1016,787.5 1017,787.5 1018,787 1019,786.5 1021,786.5 1022,786 1023,786.5 1026,786.5 1027,786 1028,786 1029,786.5 1031,786.5 1032,786 1033,785 1034,785.5 1035,785.5 1036,786 1037,786.5 1038,786 1039,785.5 1040,786.5 1042,786.5 1043,786 1044,786 1045,785.5 1046,786 1048,786 1049,785.5 1050,785 1052,785 1053,786 1054,786.5 1055,786 1056,785 1057,786 1058,786.5 1059,786 1060,786 1061,786.5 1065,786.5 1066,786 1067,786 1068,786.5 1069,787 1070,787 1071,786.5 1072,787 1073,788 1074,788.5 1075,789 1076,788 1077,787.5 1078,787.5 1079,788 1080,787.5 1081,787.5 1082,788 1083,788 1084,787.5 1085,788.5 1090,788.5 1091,788 1092,788.5 1093,788.5 1094,787.5 1095,788 1097,788 1098,788.5 1099,788.5 1100,788 1102,788 1103,787.5 1104,786.5 1105,787.5 1106,787.5 1107,786.5 1108,785.5 1109,786 1110,786 1111,786.5 1113,786.5 1114,786 1115,786 1116,787 1117,786.5 1118,786 1119,786.5 1120,786.5 1121,786 1122,785.5 1123,785 1124,785.5 1125,786 1126,786.5 1127,786 1128,786 1129,785.5 1130,785 1131,785 1132,785.5 1133,785.5 1134,784.5 1137,784.5 1138,785 1139,785 1140,785.5 1141,785.5 1142,786 1143,785.5 1144,784.5 1145,785 1146,786.5 1147,786.5 1148,786 1150,786 1151,785.5 1152,785.5 1153,786 1154,786.5 1155,787 1156,787 1157,786 1158,787 1159,787.5 1160,786.5 1161,786.5 1162,787 1163,788 1164,788.5 1165,788.5 1166,788 1168,788 1169,787.5 1170,787 1171,787.5 1172,788 1173,788 1174,787.5 1175,788 1176,787.5 1177,786.5 1178,787 1179,787.5 1180,787 1183,787 1184,786.5 1186,786.5 1187,786 1189,786 1190,786.5 1191,786.5 1192,786 1194,786 1195,785.5 1196,785 1197,785.5 1198,785.5 1199,786 1200,786 1201,786.5 1202,786.5 1203,787 1204,786 1205,786 1206,786.5 1207,785.5 1208,785 1209,785.5 1210,785.5 1211,785 1213,785 1214,784.5 1215,784 1219,784 1220,785.5 1221,786 1222,786.5 1223,787 1224,787.5 1225,787.5 1226,788 1227,788 1228,788.5 1230,788.5 1231,788 1232,787.5 1233,788 1234,789 1235,788.5 1236,787.5 1237,788 1238,788.5 1239,788 1241,788 1242,788.5 1243,789 1244,788.5 1245,789 1246,789.5 1247,788.5 1248,789 1249,789 1250,789.5 1251,790 1252,789 1253,788.5 1255,788.5 1256,789 1257,789 1258,789.5 1259,789.5 1260,789 1261,790.5 1262,791 1263,790 1264,790.5 1265,790.5 1266,790 1267,790.5 1268,790 1269,790 1270,789.5 1271,789 1272,790 1273,790 1274,789.5 1275,790 1276,790.5 1277,790 1278,789.5 1281,789.5 1282,790 1283,789.5 1284,789.5 1285,790 1286,790 1287,790.5 1288,789 1289,788.5 1290,789.5 1291,789.5 1292,793.5 1293,794 1293.5,794 1293.5,860 1294.2,883 1295,884 1296,885 1297,886.5 1298,889 1299,893 1300,899 1301,904 1302,908 1303,912.5 1304,918.5 1305,925 1306,930.5 1307,935.5 1308,939.5 1309,943 1310,946 1311,948.5 1312,950.5 1313,952.5 1314,954 1315,955.5 1316,957 1317,958 1318,959 1319,960 1320,961 1321,962 1322,962.5 1323,963 1324,964 1325,964.5 1326,965.5 1327,966 1328,966 1329,966.5 1330,966.5 1331,967 1334,967 1335,967.5 1340,967.5 1341,968 1375,968 1376,968.5 1377,968 1379,968 1380,968.5 1436,968.5 1437,969 1438,968.5 1452,968.5 1453,969 1454,968.5 1461,968.5 1462,969 1463,969 1464,968.5 1468,968.5 1469,969 1470,968.5 1485,968.5 1486,969 1488,969 1489,968.5 1490,968.5 1491,969 1492,968.5 1493,969 1495,969 1496,968.5 1512,968.5 1513,969 1514,968.5 1518,968.5 1519,969 1521,969 1522,968.5 1524,968.5 1525,969 1526,969 1527,968.5 1533,968.5 1534,969 1537,969 1538,968.5 1540,968.5 1541,969 1543,969 1544,968.5 1550,968.5 1551,969 1554,969 1555,968.5 1557,968.5 1558,969 1560,969 1561,968.5 1564,968.5 1565,969 1567,969 1568,968.5 1569,969 1573,969 1574,968.5 1578,968.5 1579,969 1581,969 1582,968.5 1596,968.5 1597,969 1599,969 1600,968.5 1603,968.5 1604,969 1605,968.5 1620,968.5 1621,969 1622,968.5 1624,968.5 1625,969 1641,969 1642,968.5 1646,968.5 1647,969 1648,969 1649,968.5 1652,968.5 1653,969 1656,969 1657,968.5 1664,968.5 1665,969 1672,969 1673,968.5 1677,968.5 1678,969 1680,969 1681,968.5 1682,968.5 1683,969 1684,968.5 1688,968.5 1689,969 1690,968.5 1691,969 1692,968.5 1693,968.5 1694,969 1702,969 1703,968.5 1704,968.5 1705,969 1706,969 1707,968.5 1731,968.5 1732,969 1733,969 1734,968.5 1738,968.5 1739,969 1741,969 1742,968.5 1743,969 1744,969 1745,968.5 1751,968.5"/>
<polyline stroke="#96dc32" stroke-width="1.4" points="3,430.5 195,430.5 196,430 197,429.5 198,429 199,428 200,427.5 201,427 202,426 203,425.5 204,424.5 205,424 206,423 207,422.5 208,421.5 209,421 210,420 211,419 212,418.5 213,417.5 214,417 215,416 216,415.5 217,414.5 218,414 219,413 220,412.5 221,412 222,411 223,410.5 224,410 225,409 226,408.5 227,408 228,407.5 229,407 230,406.5 231,406 232,405.5 233,405 234,404.5 235,404 236,403.5 237,403 238,403 239,402.5 240,402.5 241,402 244,402 245,401.5 261,401.5 262,402 266,402 267,402.5 268,403 272,403 273,403.5 274,403.5 275,404 277,404 278,404.5 281,404.5 282,405 284,405 285,405.5 287,405.5 288,406 290,406 291,406.5 293,406.5 294,407 297,407 298,407.5 300,407.5 301,408 303,408 304,408.5 307,408.5 308,409 309,409 310,409.5 311,409.5 312,410 314,410 315,409.5 316,409.5 317,410 318,410 319,410.5 320,410 321,410.5 322,410.5 323,411 324,411.5 325,411.5 326,412 334,412 335,412.5 338,412.5 339,413 341,413 342,413.5 345,413.5 346,413 352,413 353,413.5 357,413.5 358,414 362,414 363,414.5 366,414.5 367,414 368,414.5 369,414 373,414 374,414.5 376,414.5 377,414 378,414 379,413.5 386,413.5 387,413 388,413.5 399,413.5 400,413 401,413 402,413.5 403,413.5 404,413 405,413.5 424,413.5 425,413 441,413 442,413.5 447,413.5 448,413 451,413 452,413.5 453,413 473,413 474,412.5 475,413 480,413 481,412.5 486,412.5 487,413 490,413 491,412.5 494,412.5 495,413 498,413 499,412.5 518,412.5 519,412 520,412.5 524,412.5 525,412 526,412 527,412.5 528,412 529,412.5 530,412 531,412 532,412.5 533,412.5 534,413 536,413 537,412.5 542,412.5 543,412 545,412 546,412.5 551,412.5 552,413 553,412.5 560,412.5 561,412 564,412 565,412.5 566,412 567,412 568,412.5 580,412.5 581,412 585,412 586,412.5 607,412.5 608,412 610,412 611,412.5 616,412.5 617,413 620,413 621,412.5 627,412.5 628,413 630,413 631,412.5 640,412.5 641,413 642,412.5 647,412.5 648,413 649,412.5 652,412.5 653,412 654,412 655,412.5 666,412.5 667,412 669,412 670,412.5 684,412.5 685,412 686,412.5 687,412 688,412.5 689,412 694,412 695,412.5 699,412.5 700,412 703,412 704,412.5 705,412.5 706,412 707,412.5 708,412.5 709,412 731,412 732,411.5 733,411.5 734,412 736,412 737,411.5 740,411.5 741,412 744,412 745,411.5 777,411.5 778,411 779,411 780,410.5 781,411 786,411 787,411.5 790,411.5 791,411 794,411 795,411.5 799,411.5 800,411 804,411 805,411.5 812,411.5 813,411 817,411 818,411.5 820,411.5 821,411 832,411 833,410.5 834,411 837,411 838,410.5 846,410.5 847,411 848,410.5 857,410.5 858,410 862,410 863,410.5 865,410.5 866,410 867,410 868,409.5 869,409.5 870,410 872,410 873,410.5 876,410.5 877,410 883,410 884,409.5 885,409.5 886,410 894,410 895,409.5 898,409.5 899,410 902,410 903,409.5 904,409.5 905,410 908,410 909,409.5 918,409.5 919,409 920,409.5 921,409 922,409 923,409.5 927,409.5 928,409 933,409 934,409.5 936,409.5 937,409 948,409 949,408.5 956,408.5 957,409 958,409 959,408.5 964,408.5 965,409 967,409 968,409.5 971,409.5 972,409 973,409.5 976,409.5 977,410 979,410 980,409.5 986,409.5 987,410 1002,410 1003,410.5 1008,410.5 1009,410 1012,410 1013,410.5 1017,410.5 1018,411 1019,410.5 1022,410.5 1023,411 1025,411 1026,410.5 1029,410.5 1030,411 1031,411 1032,410.5 1041,410.5 1042,410 1051,410 1052,409.5 1056,409.5 1057,409 1060,409 1061,409.5 1062,409.5 1063,409 1081,409 1082,409.5 1085,409.5 1086,409 1087,409 1088,409.5 1092,409.5 1093,409 1094,409.5 1103,409.5 1104,409 1105,409 1106,409.5 1112,409.5 1113,409 1125,409 1126,408.5 1128,408.5 1129,408 1133,408 1134,408.5 1135,408 1136,408.5 1137,408 1145,408 1146,408.5 1147,408.5 1148,408 1154,408 1155,408.5 1156,408.5 1157,408 1160,408 1161,408.5 1162,408 1168,408 1169,408.5 1170,408.5 1171,409 1172,408.5 1173,408.5 1174,409 1181,409 1182,409.5 1184,409.5 1185,410 1187,410 1188,410.5 1195,410.5 1196,411 1198,411 1199,410.5 1207,410.5 1208,411 1209,410.5 1211,410.5 1212,411 1213,410.5 1218,410.5 1219,411 1230,411 1231,411.5 1234,411.5 1235,412 1242,412 1243,412.5 1244,412.5 1245,413 1248,413 1249,413.5 1255,413.5 1256,413 1262,413 1263,413.5 1265,413.5 1266,413 1268,413 1269,413.5 1278,413.5 1279,414 1280,414.5 1288,414.5 1289,414 1292,414 1293,414.5 1293.5,414.5 1293.5,398.7 1294.5,378.7 1295.5,368.7 1296.5,362.5 1297.5,357.5 1299,353.8 1300,352.3 1303.5,352.3 1304,352.5 1305,353.5 1306,355 1307,356.5 1308,358 1309,359.5 1310,361 1311,363 1312,365 1313,367.5 1314,370 1315,372.5 1316,374.5 1317,377 1318,379 1319,380.5 1320,382.5 1321,384 1322,385.5 1323,387 1324,388.5 1325,390 1326,391.5 1327,393 1328,394.5 1329,396 1330,397.5 1331,399 1332,400 1333,401.5 1334,402.5 1335,403.5 1336,404.5 1337,405.5 1338,406.5 1339,407 1340,408 1341,409 1342,410 1343,411 1344,411.5 1345,412.5 1346,413 1347,414 1348,414.5 1349,415 1350,416 1351,416.5 1352,417 1353,417.5 1354,418 1355,418.5 1356,419 1357,419.5 1358,420 1359,420 1360,420.5 1361,421 1362,421.5 1363,421.5 1364,422 1365,422.5 1366,422.5 1367,423 1368,423 1369,423.5 1370,423.5 1371,424 1372,424 1373,424.5 1375,424.5 1376,425 1377,425 1378,425.5 1380,425.5 1381,426 1384,426 1385,426.5 1388,426.5 1389,427 1391,427 1392,427.5 1394,427.5 1395,428 1398,428 1399,428.5 1405,428.5 1406,429 1419,429 1420,429.5 1437,429.5 1438,430 1462,430 1463,430.5 1751,430.5"/>
<polyline stroke="#fbf324" stroke-width="2" points="3,266 56,266 56.3,261 56.6,271 57,266 58,266 59,265.5 60,266 61,265.5 62,265.5 63,262 64,261 65,259.5 66,258.5 67,257.5 68,256.5 69,255.5 70,254.5 71,253.5 72,252.5 73,252 74,251 75,250 76,249.5 77,249 78,248 79,247 80,246 81,245.5 82,244.5 83,243.5 84,243 85,242.5 86,241.5 87,241.5 88,240 89,239.5 90,239 91,238.5 92,238.5 93,238 94,237 95,236 97,236 98,235 99,234 100,233.5 101,233.5 102,233 103,232.5 104,232 105,232 106,231.5 107,231 108,230 109,229.5 111,229.5 112,228.5 114,228.5 115,228 116,228 117,227 118,226.5 119,226.5 120,227 121,226 122,225.5 123,225 124,225 125,224.5 126,224.5 127,224 129,224 130,223.5 131,223.5 132,223 133,222.5 134,222 135,222.5 136,222.5 137,222 141,222 142,221.5 143,221 144,220.5 146,220.5 147,220 150,220 151,219.5 155,219.5 156,219 157,218.5 158,219 161,219 162,218.5 163,218 166,218 167,217.5 168,217.5 169,217 173,217 174,216.5 175,217 176,216.5 179,216.5 180,216 187,216 188,215.5 189,216 192,216 193,216.5 194,217 195,219 196,221 197,221.5 198,222.5 199,223.5 200,224.5 201,225.5 202,226 203,226.5 204,226.5 205,227 206,228 207,228.5 208,228.5 209,229 210,229.5 211,229.5 212,230 213,230 214,230.5 215,230.5 216,231 217,231 218,231.5 219,232 220,232.5 222,232.5 223,233 224,233 225,233.5 226,233.5 227,234 228,234.5 230,234.5 231,235 232,235.5 233,236 234,237 236,237 237,237.5 238,237 239,237.5 240,238.5 242,238.5 243,239 244,239 245,238 246,238.5 247,239.5 248,239.5 249,240 250,241.5 251,240.5 252,240 253,241 255,241 256,240.5 257,240.5 258,241.5 259,241.5 260,240 261,240 262,241 263,241 264,240 265,240.5 266,240.5 267,240 268,240.5 269,239.5 270,240.5 271,241 272,240 273,240 274,240.5 275,239 276,239 277,240 278,241 279,241 280,240.5 282,240.5 283,241 284,241 285,240.5 286,241 287,240 288,239.5 289,241 290,241.5 291,240.5 296,240.5 297,240 298,240.5 299,241 300,239.5 301,239.5 302,240.5 303,240.5 304,240 305,240 305.3,236 305.6,242 306,242.5 307,242 308,240 309,240.5 310,240.5 311,239.5 312,239 313,240 314,241 315,241.5 316,241 317,240.5 318,242 319,241.5 320,239.5 321,240 322,240.5 323,241 324,241 325,240 326,240 327,242 328,242.5 329,239.5 330,239 331,240 332,240.5 333,240.5 334,241.5 335,242 336,241.5 337,241 338,240.5 339,240.5 340,241.5 341,241.5 342,240.5 343,241 344,241 345,240.5 346,240 347,239.5 348,240 349,238.5 350,239.5 351,241.5 352,240.5 353,241 355,241 356,239.5 357,239 358,240.5 359,241.5 360,242 361,242 362,240.5 363,238.5 364,239.5 365,240.5 366,241 367,241 368,240.5 369,239.5 370,240 371,240.5 372,240.5 373,241 374,240.5 377,240.5 378,241 379,240.5 380,239.5 381,241 381.3,230 381.6,246 382,241 384,241 385,240 386,239.5 387,240 388,240.5 389,241 390,240 391,239.5 392,240 393,241 394,240 395,239.5 396,240.5 399,240.5 400,241.5 401,241.5 402,241 403,241 404,240 405,240 406,240.5 407,240 409,240 410,240.5 411,240.5 412,240 413,241 414,241.5 416,241.5 417,240.5 418,240 419,240 420,240.5 421,241 422,239.5 425,239.5 426,240 427,239 428,240 429,240.5 430,239.5 431,240 432,242 433,240.5 434,240.5 435,241 436,239.5 437,240 438,239.5 439,240.5 440,241.5 441,240 442,240 443,239.5 444,239.5 445,240.5 446,240 447,239 448,240 449,241 450,241.5 451,241 452,240 453,240.5 454,240.5 455,240 456,241 457,242 458,241.5 459,240.5 460,240.5 461,239.5 462,239.5 463,240 464,241 465,242 466,241 467,240.5 468,239 469,239.5 470,241.5 471,241 472,240.5 473,241 474,240 475,240 476,241.5 477,241.5 478,240.5 479,241 480,240 481,239.5 482,241 483,240.5 484,240.5 485,241 486,239 487,239.5 488,240 490,240 491,240.5 494,240.5 495,240 496,241 497,241.5 498,240.5 499,239.5 500,240.5 501,241.5 502,241 503,240.5 504,240 505,239.5 506,239.5 507,240.5 508,241 509,240.5 510,240.5 511,241.5 512,241 514,241 515,240.5 516,241 518,241 519,240.5 520,240.5 521,241 522,240 524,240 525,241.5 526,242 527,241.5 528,240.5 529,239.5 530,240 531,240 532,241 533,241.5 534,241 535,241 536,240.5 537,239.5 538,240 539,240.5 540,241 541,241 542,241.5 543,240.5 544,239.5 545,240.5 546,240 547,240 548,241 549,242 550,242 551,241.5 552,240.5 553,241.5 554,241 555,241 556,241.5 557,241.5 558,240.5 559,240.5 560,241 561,241.5 562,241 563,241.5 564,240.5 565,239.5 566,240.5 567,240.5 568,239.5 569,239.5 570,240 571,240.5 573,240.5 574,242 575,242 576,241.5 577,242 578,240.5 580,240.5 581,241 583,241 584,242 585,240.5 586,240.5 587,242.5 588,241.5 589,241 590,240.5 594,240.5 595,239 596,240 597,242.5 598,242 599,241.5 600,242 601,241 602,241.5 603,242.5 604,241.5 605,241 606,242 607,241 608,241.5 609,243.5 610,242 611,242 612,242.5 613,241.5 614,242 615,242.5 616,241.5 617,242.5 618,243 619,242.5 620,241 621,240 622,241.5 623,241.5 624,241 627,241 628,242 629,242 630,241 631,241.5 632,242.5 633,241.5 634,241 635,242 636,242 637,242.5 638,242 639,242.5 640,243 641,243.5 642,244 644,244 645,244.5 646,246 647,245.5 648,244.5 649,245.5 650,244 651,242.5 652,243 653,244 654,246 655,246 656,245.5 657,245 658,243 659,242 660,244 661,245 662,244 663,244.5 665,244.5 666,246 667,245 668,243.5 669,244.5 673,244.5 674,245 675,244.5 676,244 677,244.5 678,244 679,243.5 680,244.5 681,245 682,244.5 683,245 684,245.5 685,244 686,245 687,246.5 688,245.5 689,244 690,244.5 691,244.5 692,244 693,245.5 694,246 695,245 698,245 699,245.5 700,245 701,244.5 702,246 703,246.5 704,245 705,246 706,246 707,244.5 708,245 709,245 710,244.5 711,245 712,245.5 713,244.5 715,244.5 716,245.5 717,245.5 718,244.5 719,246 721,246 722,247 723,246.5 724,245 725,245.5 726,247 727,247.5 729,247.5 730,248.5 731,247 732,247 733,248 734,247 735,246.5 736,248 737,248.5 738,246.5 739,246 740,247 742,247 743,246 744,247 745,247 746,246.5 748,246.5 749,247 750,248 751,247 752,246.5 753,246.5 754,247.5 755,248 756,247.5 757,247.5 758,247 759,247.5 760,246.5 761,247 762,248 763,246.5 764,247.5 765,248 766,247.5 767,247 768,246 769,246.5 770,248 771,247.5 773,247.5 774,246.5 775,247 776,247.5 778,247.5 779,246.5 780,246 781,245.5 782,246 783,246 784,247 785,247 786,246 787,247.5 788,248.5 789,246.5 790,247.5 791,248.5 792,247.5 793,246 794,246 795,247.5 796,248 797,247 798,247 799,248 800,247.5 801,246.5 802,246.5 803,248 804,249.5 805,249 806,248 807,247.5 808,246.5 809,246.5 810,247 811,246 812,246.5 813,247 814,247.5 815,248 816,248 817,247 818,247.5 819,248 820,248 821,247.5 822,245.5 823,246 824,248.5 825,249 826,247.5 827,248 828,248.5 829,248 830,247.5 833,247.5 834,246.5 835,247 836,248 837,248.5 838,248 839,248 840,249 841,249 842,248.5 843,249 844,248.5 845,248 846,248.5 847,249 848,248.5 849,248 850,248 851,247 852,247.5 853,248 854,246.5 856,246.5 857,246 858,247 859,247 860,248 861,247.5 862,247 863,248 864,249 865,249 866,248.5 867,248 868,248 869,248.5 870,248 871,247.5 872,248 874,248 875,249 876,248.5 877,247.5 878,248 879,248.5 882,248.5 883,247.5 884,247 885,247.5 887,247.5 888,247 889,247.5 890,248.5 891,249 892,248.5 893,249 894,248.5 895,246.5 896,246.5 897,247.5 898,248.5 899,250 900,248.5 901,248.5 902,250.5 903,249.5 904,249 905,249.5 906,249.5 907,248 908,248 909,247.5 910,247.5 911,248.5 913,248.5 914,248 915,248.5 916,248.5 917,248 918,248 919,247.5 920,248 922,248 923,247 924,246.5 925,248 926,248.5 927,248 928,246.5 929,247 930,248 931,248 932,247.5 933,248.5 934,249.5 935,249.5 936,248.5 937,248 938,248.5 939,247.5 940,248 941,249 942,248.5 943,249 944,249.5 947,249.5 948,248 949,247.5 950,249 951,248.5 952,248 953,249 954,249.5 955,250 956,249.5 957,249 958,249 959,249.5 960,249 961,249 962,249.5 963,248.5 964,249 966,249 967,248 969,248 970,247.5 971,247 972,249 973,249.5 974,248.5 975,249.5 976,249 977,249 978,248 979,248 980,248.5 981,248.5 982,249 983,248 984,247 985,247 986,248.5 987,249.5 988,249 989,248 990,246 991,247 992,248.5 994,248.5 995,249 996,248 997,247.5 998,248.5 999,249 1000,249 1001,250 1002,250 1003,248.5 1004,248.5 1005,248 1006,249 1007,249.5 1008,249 1010,249 1011,248 1012,246 1013,248.5 1014,250.5 1015,249 1016,248 1017,247 1018,249 1019,248 1020,247 1021,249 1022,249.5 1023,249.5 1024,249 1025,250 1026,249.5 1027,247.5 1028,248.5 1029,250 1030,249.5 1031,249.5 1032,249 1033,248 1034,249 1035,250.5 1036,250.5 1037,249.5 1038,248 1039,247.5 1040,248 1041,249 1042,249.5 1043,248.5 1044,248 1045,249 1049,249 1050,249.5 1051,249 1052,248.5 1053,248.5 1054,249 1055,247.5 1056,248 1057,249 1058,249.5 1059,249.5 1060,249 1062,249 1063,248.5 1064,247.5 1065,249 1066,249 1067,248 1068,249 1069,249.5 1071,249.5 1072,250 1073,250 1074,250.5 1075,250 1076,248.5 1077,249 1078,248.5 1079,249 1080,250 1081,249.5 1082,248 1083,249 1084,249.5 1085,250.5 1086,250.5 1087,249.5 1088,249 1090,249 1091,248 1092,248.5 1093,249 1094,249 1095,248.5 1096,249.5 1097,250.5 1098,250 1099,249 1100,248 1101,248.5 1102,249 1103,249 1104,248.5 1105,249.5 1106,249.5 1107,248.5 1109,248.5 1110,249 1111,248.5 1112,248.5 1113,249.5 1114,249.5 1115,248.5 1116,248.5 1117,249 1118,249.5 1119,250 1120,249.5 1121,248.5 1122,249 1123,250 1124,249.5 1125,249.5 1126,249 1127,248.5 1128,249 1129,250 1130,250 1131,247.5 1132,247.5 1133,249.5 1134,250 1135,250.5 1136,251 1137,251.5 1138,250.5 1139,250.5 1140,249 1141,249 1142,250 1143,249.5 1144,249.5 1145,250 1146,249.5 1147,249 1148,249 1149,249.5 1150,249 1151,249.5 1152,248.5 1153,248 1154,248.5 1155,248 1156,249.5 1159,249.5 1160,250.5 1161,249.5 1162,249.5 1163,249 1164,248.5 1165,249.5 1166,249 1167,249 1168,250 1169,249 1171,249 1172,248 1173,248.5 1174,249 1175,250 1178,250 1179,250.5 1180,251 1181,250 1182,250 1183,250.5 1184,251 1185,251 1186,250.5 1187,248.5 1188,247.5 1189,248 1190,250 1191,250.5 1192,250 1193,249.5 1195,249.5 1196,250 1197,249.5 1198,249.5 1199,250 1200,249.5 1201,250 1202,250 1203,249.5 1204,249.5 1205,250 1206,250 1207,251.5 1208,252.5 1209,251 1211,251 1212,250 1213,251 1214,252.5 1215,252 1216,252 1217,252.5 1218,252.5 1219,253 1220,253 1221,252.5 1222,252 1223,252 1224,251.5 1225,251 1226,251.5 1227,251 1228,249.5 1229,250 1230,250 1231,249 1232,249 1233,250 1234,250.5 1235,248.5 1236,249 1237,251 1238,251.5 1239,250 1240,249 1241,250 1243,250 1244,249 1245,249.5 1246,250 1247,249 1248,248.5 1249,249.5 1250,249.5 1251,250 1253,250 1254,249.5 1255,248.5 1256,249 1257,250.5 1258,251.5 1259,250 1260,248 1263,248 1264,247.5 1265,247.5 1266,248 1268,248 1269,248.5 1270,248.5 1271,247.5 1272,247 1273,248.5 1274,249 1275,248.5 1276,249 1277,249.5 1278,250 1279,249 1280,248.5 1281,249 1282,248.5 1283,248 1284,248.5 1285,249 1286,250 1287,251 1288,250 1289,252 1290,253 1291,249.5 1292,243.5 1293,239.5 1293.5,248 1293.5,119 1294.4,100 1295,78.5 1295.6,82 1296,90.5 1296.8,100 1297.5,107 1298.5,106 1299.2,110.5 1300,109 1301,112.5 1302,112 1303,114.5 1304.5,113 1305.5,117 1307,118.5 1308,120 1309,126 1310,135.4 1311,144 1312,153.7 1313,164 1314,174 1315,183.5 1316,192.4 1317.2,201 1318.5,208.7 1320,215.5 1321.5,221 1323,226 1325,231 1325.5,234.4 1326,230.7 1326.5,236.1 1327,232.2 1327.5,237.5 1328,234.4 1328.5,239 1329,235.6 1329.5,239.4 1330,236.6 1330.5,241.9 1331,238.4 1331.5,242.1 1332,239.7 1332.5,243.1 1333,239.9 1333.5,243.8 1334,241.5 1334.5,245.8 1335,241.4 1335.5,245.8 1336,242.8 1336.5,247.2 1337,242.1 1337.5,246.9 1338,243.8 1338.5,246.8 1339,244.2 1339.5,247.9 1340,244.7 1340.5,248 1341,245 1341.5,248.3 1342,245.4 1342.5,248.9 1343,245.3 1343.5,248.6 1344,249 1345,250.5 1346,251.5 1347,252.5 1348,253.5 1349,254 1350,254.5 1352,254.5 1353,255 1354,255 1355,255.5 1356,255.5 1357,256 1358,255.5 1359,255.5 1360,256 1361,256.5 1362,256.5 1363,257 1364,257 1365,257.5 1366,257 1367,257 1368,257.5 1369,258 1370,258 1371,259 1373,259 1374,259.5 1375,259.5 1376,260 1377,259.5 1380,259.5 1381,260 1387,260 1388,259.5 1389,260 1392,260 1393,259.5 1394,259.5 1395,260 1396,260 1397,259.5 1405,259.5 1406,259 1410,259 1411,258.5 1413,258.5 1414,258 1418,258 1419,257.5 1422,257.5 1423,258 1431,258 1432,258.5 1436,258.5 1437,259 1438,259 1439,259.5 1445,259.5 1446,259 1447,259 1448,259.5 1449,259.5 1450,260 1451,259.5 1452,260 1453,259.5 1454,260 1467,260 1468,260.5 1472,260.5 1473,260 1475,260 1476,260.5 1477,260 1480,260 1481,260.5 1482,260.5 1483,260 1484,259.5 1485,259 1486,259.5 1487,259.5 1488,259 1496,259 1497,258.5 1499,258.5 1500,259 1507,259 1508,259.5 1514,259.5 1515,260 1516,260.5 1517,260.5 1518,260 1526,260 1527,260.5 1534,260.5 1535,260 1537,260 1538,260.5 1545,260.5 1546,261 1547,260.5 1548,261 1549,260.5 1551,260.5 1552,261 1554,261 1555,260.5 1557,260.5 1558,260 1559,260 1560,260.5 1561,260 1565,260 1566,259.5 1568,259.5 1569,260 1570,260 1571,259.5 1583,259.5 1584,260 1586,260 1587,260.5 1588,260 1589,260 1590,259.5 1591,260 1592,260 1593,260.5 1594,260.5 1595,260 1598,260 1599,259.5 1618,259.5 1619,260 1620,260 1621,260.5 1622,260 1625,260 1626,260.5 1627,260 1628,260.5 1629,260 1630,260.5 1635,260.5 1636,261 1637,260.5 1638,261 1639,260.5 1640,260.5 1641,261 1642,261 1643,261.5 1645,261.5 1646,261 1647,261 1648,261.5 1652,261.5 1653,262 1658,262 1659,262.5 1660,262 1661,262 1662,262.5 1663,262 1668,262 1669,262.5 1675,262.5 1676,263 1677,262.5 1682,262.5 1683,263 1684,263 1685,262.5 1694,262.5 1695,262 1696,262.5 1702,262.5 1703,263 1704,262.5 1708,262.5 1709,263 1710,263 1711,262.5 1712,262.5 1713,263 1718,263 1719,262.5 1724,262.5 1725,263 1732,263 1733,262.5 1734,262.5 1735,263 1737,263 1738,262.5 1739,263 1742,263 1743,262.5 1746,262.5 1747,263 1751,263"/>
<polygon fill="#fbf324" stroke="none" points="63,267 63,255 65.5,255 66,256.5 67,255 68.5,255 69.5,254.5 71,253.5 70,256 69,258.5 68,260 67,261.5 66,263 65.5,267"/>
<rect x="64" y="260" width="1" height="12" fill="#fbf324"/>
</g>
<path d="M1711,65 H1742 Q1744.5,65 1744.5,67.5 V97 Q1744.5,99.5 1742.6,97.7 L1710.4,66.6 Q1709,65 1711,65Z" fill="#4d4d4d"/>
<circle cx="1737.2" cy="71.7" r="4" fill="none" stroke="#a9a9a9" stroke-width="1.3"/>
<line x1="1734" y1="75" x2="1728" y2="80.6" stroke="#a0a0a0" stroke-width="2.7" stroke-linecap="round"/>
</g>
<path d="M9,161.9 H76 Q77.5,161.9 78.3,163.1 L84,174.3 L78.3,185.5 Q77.5,186.7 76,186.7 H9 Q6,186.7 6,183.7 V164.9 Q6,161.9 9,161.9Z" fill="#1d1c0a" stroke="#f3eb2c" stroke-width="2"/>
<line x1="33" x2="33" y1="161.9" y2="186.7" stroke="#f3eb2c" stroke-width="2"/>
<text class="dj" x="19.3" y="178.3" font-size="11" fill="#f3eb2c" text-anchor="middle">C 1</text>
<text class="dj" x="57" y="178.3" font-size="11" fill="#f3eb2c" text-anchor="middle">20 V</text>
<path d="M9,396.1 H76 Q77.5,396.1 78.3,397.3 L84,408.5 L78.3,419.7 Q77.5,420.9 76,420.9 H9 Q6,420.9 6,417.9 V399.1 Q6,396.1 9,396.1Z" fill="#141c08" stroke="#8acb2e" stroke-width="2"/>
<line x1="33" x2="33" y1="396.1" y2="420.9" stroke="#8acb2e" stroke-width="2"/>
<text class="dj" x="19.3" y="412.5" font-size="11" fill="#8acb2e" text-anchor="middle">C 4</text>
<text class="dj" x="57" y="412.5" font-size="11" fill="#8acb2e" text-anchor="middle">200 mV</text>
<line x1="3" x2="52" y1="735.5" y2="735.5" stroke="#ee8e27"/>
<path d="M9,722.7 H28 Q30,722.7 31.2,723.7 L42,735 L31.2,746.3 Q30,747.3 28,747.3 H9 Q6,747.3 6,744.3 V725.7 Q6,722.7 9,722.7Z" fill="#24170a" stroke="#ee8e27" stroke-width="1.2"/>
<text class="dj" x="23.6" y="739.4" font-size="12" fill="#ee8e27" text-anchor="middle">M 1</text>
<line x1="3" x2="52" y1="963.5" y2="963.5" stroke="#7b2d90"/>
<path d="M9,950.7 H28 Q30,950.7 31.2,951.7 L42,963 L31.2,974.3 Q30,975.3 28,975.3 H9 Q6,975.3 6,972.3 V953.7 Q6,950.7 9,950.7Z" fill="#7b2d90" stroke="#7b2d90" stroke-width="1.2"/>
<text class="dj" x="23.6" y="967.4" font-size="12" fill="#ffffff" text-anchor="middle">M 2</text>
<polygon points="45,58 65,58 55,67.5" fill="#f08a1e"/>
<path d="M46.5,69 H63.5 V87 H59 L55,95 L51,87 H46.5Z" fill="#000" stroke="#f08a1e" stroke-width="2"/>
<text class="dj" x="55" y="83.3" font-size="14" fill="#f08a1e" text-anchor="middle" font-weight="bold">T</text>
<g fill="none" stroke="#e4e4e4" stroke-width="1.3"><path d="M593,36.5 H586.5 V52.5 H593"/><path d="M1161,36.5 H1167.5 V52.5 H1161"/></g>
<rect x="587" y="44" width="581" height="2" fill="#a8a8a8"/>
<polygon points="596,33 611,33 603.5,38.5" fill="#f08a1e"/>
<path d="M598,41 H609.5 V51.5 H606 L603.7,56 L601.4,51.5 H598Z" fill="#000" stroke="#f08a1e" stroke-width="1.6"/>
<text class="dj" x="603.7" y="50" font-size="9" fill="#f08a1e" text-anchor="middle" font-weight="bold">T</text>
<circle cx="1761.5" cy="503.5" r="1.8" fill="#bdbdbd"/>
<circle cx="1761.5" cy="512" r="1.8" fill="#bdbdbd"/>
<circle cx="1761.5" cy="520.5" r="1.8" fill="#bdbdbd"/>
<text class="dj" x="20" y="18.7" font-size="15" fill="#f0f0f0">File</text>
<text class="dj" x="86" y="18.7" font-size="15" fill="#f0f0f0">Edit</text>
<text class="dj" x="155" y="18.7" font-size="15" fill="#f0f0f0">Utility</text>
<text class="dj" x="241" y="18.7" font-size="15" fill="#f0f0f0">Help</text>
<text class="dj" x="16" y="49.3" font-size="16.2" fill="#ececec">Waveform View</text>
<text class="lb" x="1802.7" y="43.7" font-size="14.6" fill="#f0f0f0" font-weight="bold" textLength="84" lengthAdjust="spacing">Add New...</text>
<text class="lb" x="1809.5" y="77.1" font-size="14.5" fill="#f8f8f8" text-anchor="middle" stroke="#f8f8f8" stroke-width="0.2">Cursors</text>
<text class="lb" x="1881.5" y="77.1" font-size="14.5" fill="#f8f8f8" text-anchor="middle" textLength="49" lengthAdjust="spacing" stroke="#f8f8f8" stroke-width="0.2">Callout</text>
<text class="lb" x="1809.5" y="122.9" font-size="14.5" fill="#f8f8f8" text-anchor="middle" textLength="58.3" lengthAdjust="spacing" stroke="#f8f8f8" stroke-width="0.2">Measure</text>
<text class="lb" x="1881.5" y="122.9" font-size="14.5" fill="#f8f8f8" text-anchor="middle" stroke="#f8f8f8" stroke-width="0.2">Search</text>
<text class="lb" x="1809.5" y="160.5" font-size="14.5" fill="#f8f8f8" text-anchor="middle" stroke="#f8f8f8" stroke-width="0.2">Results</text>
<text class="lb" x="1809.5" y="176.7" font-size="14.5" fill="#f8f8f8" text-anchor="middle" textLength="35.2" lengthAdjust="spacing" stroke="#f8f8f8" stroke-width="0.2">Table</text>
<text class="lb" x="1881.5" y="168.6" font-size="14.5" fill="#f8f8f8" text-anchor="middle" textLength="27.3" lengthAdjust="spacing" stroke="#f8f8f8" stroke-width="0.2">Plot</text>
<text class="lb" x="1881.5" y="218.9" font-size="14.5" fill="#f8f8f8" text-anchor="middle" textLength="49.2" lengthAdjust="spacing" stroke="#f8f8f8" stroke-width="0.2">More...</text>
<g transform="translate(1796,200)" fill="none" stroke="#b8b8b8"><rect x="2.3" y="3" width="21.5" height="19" stroke-width="2.1" stroke-dasharray="3.2 2.3"/><circle cx="15.2" cy="10.4" r="4.5" stroke-width="1.7"/><line x1="11.6" y1="13.8" x2="7" y2="17.4" stroke-width="2.6" stroke-linecap="round"/><path d="M19.6,17.6 L19.9,26.8 L22.3,24.6 L24.2,27.6 L25.7,26.7 L24,23.7 L27.2,23.3Z" fill="#b8b8b8" stroke="#2c2c2c" stroke-width="1.6" paint-order="stroke"/></g>
<polygon points="1830.4,9.5 1835.9,4.6 1836.4,4.6 1836.4,25.9 1832.3,25.9 1832.3,23.4 1830.8,25.9 1826.9,25.9 1824.6,18.6" fill="#fff"/>
<polygon points="1815.2,25.9 1820.8,25.9 1830.6,9.5 1825,9.5" fill="#2bb8d8"/>
<text class="lb" font-size="30" font-weight="bold" fill="#fff" stroke="#fff" stroke-width="0.7" y="25.9"><tspan x="1785 1797.4">Te</tspan><tspan x="1822" font-size="2" fill="#2bb8d8" stroke="none">k</tspan><tspan x="1830.2" textLength="72.6" lengthAdjust="spacingAndGlyphs">tronix</tspan></text>
<text class="lb" x="8.2" y="1016.6" font-size="14.5" fill="#f7f02e" textLength="28.6" lengthAdjust="spacingAndGlyphs" stroke="#f7f02e" stroke-width="0.35">Ch 1</text>
<text class="lb" x="8.5" y="1036.6" font-size="14.5" fill="#000">5 V/div</text>
<text class="lb" x="8.5" y="1055.6" font-size="14.5" fill="#000">1 MΩ</text>
<text class="lb" x="8.5" y="1074.4" font-size="14.5" fill="#000">200 kHz</text>
<text class="lb" x="74.8" y="1068.6" font-size="9.5" font-weight="bold" fill="#000">B<tspan dx="-0.8" dy="3.2">w</tspan></text>
<text class="lb" x="103.2" y="1016.6" font-size="14.5" fill="#10201f" textLength="28.6" lengthAdjust="spacingAndGlyphs" stroke="#10201f" stroke-width="0.35">Ch 2</text>
<text class="lb" x="103.5" y="1036.6" font-size="14.5" fill="#1e1e1e">250 mV/div</text>
<text class="lb" x="103.5" y="1055.6" font-size="14.5" fill="#1e1e1e">1 MΩ</text>
<text class="lb" x="103.5" y="1074.4" font-size="14.5" fill="#1e1e1e">200 kHz</text>
<text class="lb" x="169.8" y="1068.6" font-size="9.5" font-weight="bold" fill="#1e1e1e">B<tspan dx="-0.8" dy="3.2">w</tspan></text>
<text class="lb" x="198.2" y="1016.6" font-size="14.5" fill="#b9afb1" textLength="28.6" lengthAdjust="spacingAndGlyphs" stroke="#b9afb1" stroke-width="0.35">Ch 3</text>
<text class="lb" x="198.5" y="1036.6" font-size="14.5" fill="#1e1e1e">450 mV/div</text>
<text class="lb" x="198.5" y="1055.6" font-size="14.5" fill="#1e1e1e">1 MΩ</text>
<text class="lb" x="198.5" y="1074.4" font-size="14.5" fill="#1e1e1e">200 kHz</text>
<text class="lb" x="264.8" y="1068.6" font-size="9.5" font-weight="bold" fill="#1e1e1e">B<tspan dx="-0.8" dy="3.2">w</tspan></text>
<text class="lb" x="293.2" y="1016.6" font-size="14.5" fill="#92d930" textLength="28.6" lengthAdjust="spacingAndGlyphs" stroke="#92d930" stroke-width="0.35">Ch 4</text>
<text class="lb" x="293.5" y="1036.6" font-size="14.5" fill="#000">200 mV/div</text>
<text class="lb" x="293.5" y="1055.6" font-size="14.5" fill="#000">1 MΩ</text>
<text class="lb" x="293.5" y="1074.4" font-size="14.5" fill="#000">200 kHz</text>
<text class="lb" x="359.8" y="1068.6" font-size="9.5" font-weight="bold" fill="#000">B<tspan dx="-0.8" dy="3.2">w</tspan></text>
<text class="lb" x="388.2" y="1016.6" font-size="14.5" fill="#f7a02c" font-weight="bold" textLength="47" lengthAdjust="spacingAndGlyphs">Math 1</text>
<text class="lb" x="388.5" y="1036.6" font-size="14.5" fill="#000">72.8 mT/div</text>
<text class="lb" x="388.5" y="1055.6" font-size="14.5" fill="#000">Intg(Ch2)…</text>
<text class="lb" x="483.2" y="1016.6" font-size="14.5" fill="#ffffff" font-weight="bold" textLength="47" lengthAdjust="spacingAndGlyphs">Math 2</text>
<text class="lb" x="483.5" y="1036.6" font-size="14.5" fill="#000">1.060 kA/div</text>
<text class="lb" x="483.5" y="1055.6" font-size="14.5" fill="#000">-Intg(Ch3…</text>
<text class="lb" x="1043.1" y="1049.8" font-size="19" fill="#f2f2f2" text-anchor="middle">5</text>
<text class="lb" x="1087.9" y="1049.8" font-size="19" fill="#f2f2f2" text-anchor="middle">6</text>
<text class="lb" x="1149.1" y="1032.2" font-size="14.5" fill="#f2f2f2" text-anchor="middle">Add</text>
<text class="lb" x="1149.1" y="1048.4" font-size="14.5" fill="#f2f2f2" text-anchor="middle">New</text>
<text class="lb" x="1149.1" y="1064.6" font-size="14.5" fill="#f2f2f2" text-anchor="middle">Math</text>
<text class="lb" x="1194.1" y="1032.2" font-size="14.5" fill="#f2f2f2" text-anchor="middle">Add</text>
<text class="lb" x="1194.1" y="1048.4" font-size="14.5" fill="#f2f2f2" text-anchor="middle">New</text>
<text class="lb" x="1194.1" y="1064.6" font-size="14.5" fill="#f2f2f2" text-anchor="middle">Ref</text>
<text class="lb" x="1239.1" y="1032.2" font-size="14.5" fill="#f2f2f2" text-anchor="middle">Add</text>
<text class="lb" x="1239.1" y="1048.4" font-size="14.5" fill="#f2f2f2" text-anchor="middle">New</text>
<text class="lb" x="1239.1" y="1064.6" font-size="14.5" fill="#f2f2f2" text-anchor="middle">Bus</text>
<text class="lb" x="1286" y="1017.7" font-size="14.5" fill="#fff" textLength="72.7" lengthAdjust="spacing" stroke="#fff" stroke-width="0.15">Horizontal</text>
<text class="lb" x="1285" y="1036.6" font-size="14.5" fill="#000" textLength="65.2" lengthAdjust="spacing">4.5 ms/div</text>
<text class="lb" x="1391" y="1036.6" font-size="14.5" fill="#000">45 ms</text>
<text class="lb" x="1285" y="1055.6" font-size="14.5" fill="#000" textLength="66.9" lengthAdjust="spacing">SR: 1 MS/s</text>
<text class="lb" x="1391" y="1055.6" font-size="14.5" fill="#000">1 µs/pt</text>
<text class="lb" x="1285" y="1074.4" font-size="14.5" fill="#000" textLength="70.2" lengthAdjust="spacing">RL: 45 kpts</text>
<text class="lb" x="1405.5" y="1074.4" font-size="14.5" fill="#000">3%</text>
<path d="M1391.8,1063.6 H1399.2 V1070.8 H1397.3 L1395.5,1074.4 L1393.7,1070.8 H1391.8Z" fill="#000" stroke="#f08a1e" stroke-width="1.5"/>
<path d="M1393.3,1065.8 H1397.7 M1395.5,1065.8 V1069.9" stroke="#fff" stroke-width="1.4" fill="none"/>
<text class="lb" x="1491" y="1017.7" font-size="14.5" fill="#fff" textLength="49" lengthAdjust="spacing" stroke="#fff" stroke-width="0.15">Trigger</text>
<text class="lb" x="1504.8" y="1036.5" font-size="14.5" fill="#fff" text-anchor="middle">6</text>
<path d="M1529.8,1036.8 H1534.1 L1542.3,1027.3 H1546.2" fill="none" stroke="#2a2a90" stroke-width="1.3"/>
<text class="lb" x="1556.3" y="1036.6" font-size="14.5" fill="#000">3 V</text>
<text class="lb" x="1656.1" y="1017.7" font-size="14.5" fill="#fff" textLength="77.5" lengthAdjust="spacing" stroke="#fff" stroke-width="0.15">Acquisition</text>
<text class="lb" x="1655.3" y="1036.6" font-size="14.5" fill="#000">Manual,</text>
<text class="lb" x="1736" y="1036.6" font-size="14.5" fill="#000">Analyze</text>
<text class="lb" x="1655.3" y="1055.6" font-size="14.5" fill="#000" textLength="106.8" lengthAdjust="spacing">High Res: 16 bits</text>
<text class="lb" x="1655.3" y="1074.4" font-size="14.5" fill="#000" textLength="69" lengthAdjust="spacing">Single: 0 /1</text>
<text class="dj" x="1867" y="1020" font-size="12" fill="#fff" text-anchor="middle" font-weight="bold">Preview</text>
<text class="lb" x="1824.2" y="1054.4" font-size="14.5" fill="#000" textLength="84.8" lengthAdjust="spacing">28 May 2025</text>
<text class="lb" x="1829.6" y="1071.7" font-size="14.5" fill="#000" textLength="74.3" lengthAdjust="spacing">2:15:26 PM</text>
</svg></body></html>
